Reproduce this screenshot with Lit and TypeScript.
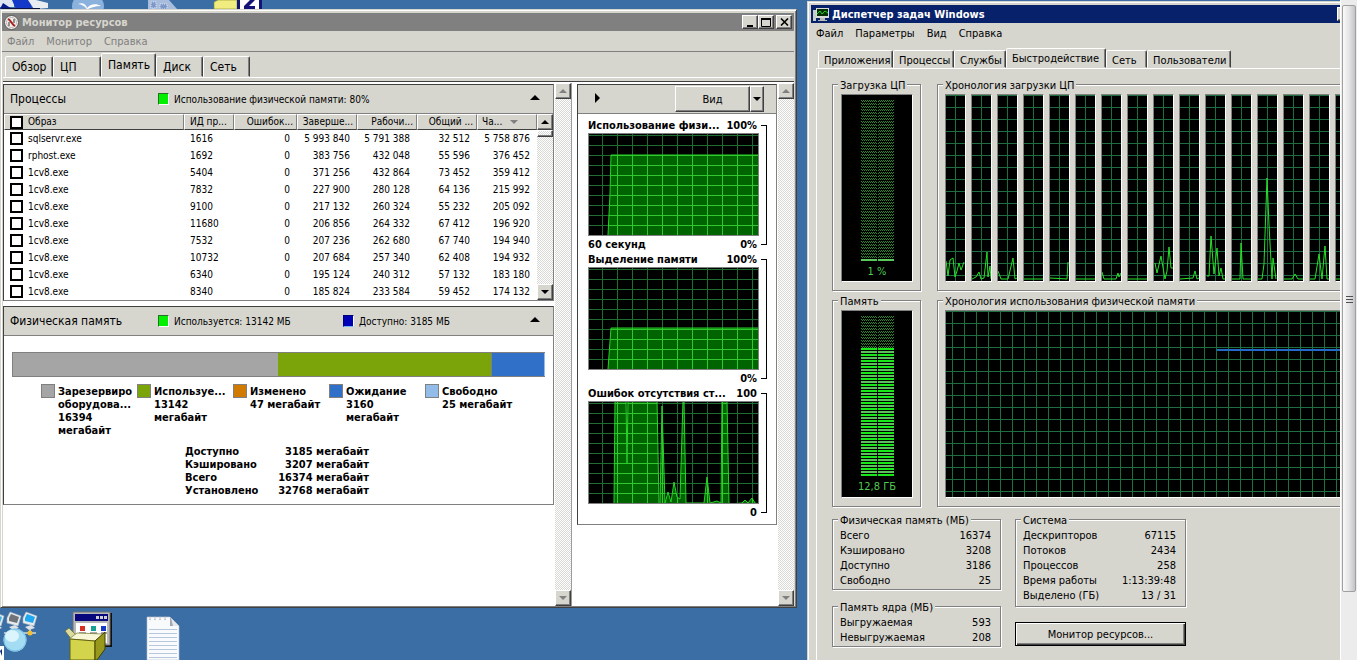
import { LitElement, html, svg, css } from "lit";
import { customElement } from "lit/decorators.js";
import { classMap } from "lit/directives/class-map.js";

type Row = [string, string, string, string, string, string, string];

const PROCESSES: Row[] = [
  ["sqlservr.exe", "1616", "0", "5 993 840", "5 791 388", "32 512", "5 758 876"],
  ["rphost.exe", "1692", "0", "383 756", "432 048", "55 596", "376 452"],
  ["1cv8.exe", "5404", "0", "371 256", "432 864", "73 452", "359 412"],
  ["1cv8.exe", "7832", "0", "227 900", "280 128", "64 136", "215 992"],
  ["1cv8.exe", "9100", "0", "217 132", "260 324", "55 232", "205 092"],
  ["1cv8.exe", "11680", "0", "206 856", "264 332", "67 412", "196 920"],
  ["1cv8.exe", "7532", "0", "207 236", "262 680", "67 740", "194 940"],
  ["1cv8.exe", "10732", "0", "207 684", "257 340", "62 408", "194 932"],
  ["1cv8.exe", "6340", "0", "195 124", "240 312", "57 132", "183 180"],
  ["1cv8.exe", "8340", "0", "185 824", "233 584", "59 452", "174 132"],
];

const SEGMENTS = [
  { kind: "reserved", mb: 16394, lines: ["Зарезервиро", "оборудова...", "16394", "мегабайт"] },
  { kind: "used", mb: 13142, lines: ["Используе...", "13142", "мегабайт"] },
  { kind: "modified", mb: 47, lines: ["Изменено", "47 мегабайт"] },
  { kind: "standby", mb: 3160, lines: ["Ожидание", "3160", "мегабайт"] },
  { kind: "free", mb: 25, lines: ["Свободно", "25 мегабайт"] },
];

const TOTALS = [
  ["Доступно", "3185 мегабайт"],
  ["Кэшировано", "3207 мегабайт"],
  ["Всего", "16374 мегабайт"],
  ["Установлено", "32768 мегабайт"],
];

const FLAT = "0,184 19,184";
const CPU_SERIES = [
  "0,166 2,181 4,165 7,163 9,182 11,176 13,168 15,175 18,167",
  "0,184 4,182 7,177 9,184 12,183 15,157 16,182 18,171 19,184",
  "0,176 3,184 10,184 15,163 17,184 19,183",
  FLAT,
  "0,183 17,184 18,167",
  FLAT,
  "0,177 2,184 14,184 16,178 17,182 19,178",
  FLAT,
  "1,168 3,178 7,161 11,184 13,176 15,152 17,173 19,173",
  "0,184 13,183 15,176 17,184 19,183",
  "1,181 3,181 5,141 8,179 11,153 13,181 15,173 17,184 19,184",
  "0,184 8,184 9,148 11,184 19,184",
  "0,184 4,184 6,169 9,83 11,130 14,184 15,163 18,184",
  "0,184 8,184 11,179 14,184 19,184",
  "0,184 5,184 9,159 12,184 15,151 17,184 19,184",
  FLAT,
];

const RAM_AREA = "19,101 21,60 22,21 170,21 170,102 19,102";
const COMMIT_AREA = "19,101 22,60 170,60 170,102 19,102";
const FAULTS_AREA =
  "25,102 26,-2 37,-2 38,62 39,-2 68,-2 70,102 71,101 73,4 76,101 79,90 82,100 85,80 88,95 91,97 94,-2 95,-2 97,101 110,101 115,101 118,75 121,101 128,99 132,101 132,102 133,-2 138,-2 140,102 153,101 156,98 159,101 163,96 166,101 169,102";

@customElement("app-root")
export class AppRoot extends LitElement {
  static styles = css`
    :host {
      --face: #d6d5ce;
      --shade: #808080;
      --dark: #404040;
      display: flex;
      height: 100vh;
      overflow: hidden;
      background: #fff;
      color: #000;
      font: 11px/13px "DejaVu Sans Condensed", "DejaVu Sans", "Noto Sans", sans-serif;
      cursor: default;
    }
    * { box-sizing: border-box; }
    button {
      font: inherit;
      color: inherit;
      margin: 0;
      padding: 0;
      border: 0;
      border-radius: 0;
      background: var(--face);
      white-space: nowrap;
    }
    svg { display: block; flex: none; }
    .desktop {
      position: relative;
      flex: 1;
      min-width: 0;
      overflow: hidden;
      background: #3a6ea5;
    }
    .shortcut { position: absolute; }
    .s-net { left: 0; top: 611px; }
    .s-box { left: 64px; top: 611px; }
    .s-note { left: 146px; top: 616px; }
    .s-pc { left: 0; top: 0; }
    .s-bird { left: 70px; top: 0; }
    .s-doc { left: 147px; top: 0; }
    .s-zip { left: 213px; top: 0; }

    .window {
      position: absolute;
      display: flex;
      flex-direction: column;
      background: var(--face);
      border: 1px solid;
      border-color: var(--face) var(--dark) var(--dark) var(--face);
      box-shadow: inset 1px 1px #fff, inset -1px -1px var(--shade);
    }
    .resmon { left: 0; top: 9px; width: 797px; height: 599px; padding: 3px 2px 1px 1px; }
    .taskman { left: 807px; top: 1px; right: -53px; height: 720px; padding: 3px; }
    .title {
      flex: none;
      display: flex;
      align-items: center;
      height: 18px;
      gap: 3px;
      padding: 0 2px;
      font-weight: bold;
      color: var(--face);
      background: var(--shade);
    }
    .taskman .title { color: #fff; background: #08216b; }
    .caption { flex: 1; margin: 0; font: inherit; font-weight: bold; }
    .controls { display: flex; color: #000; }
    .controls button { display: grid; place-items: center; width: 16px; height: 14px; }
    .controls button:last-child { margin-left: 2px; }
    .raised {
      border: 1px solid;
      border-color: #fff var(--dark) var(--dark) #fff;
      box-shadow: inset -1px -1px var(--shade);
    }
    .menu { flex: none; display: flex; height: 20px; gap: 12px; padding: 0 5px; align-items: center; }
    .menu button { background: none; }
    .resmon .menu { color: var(--shade); }

    .tabs { flex: none; display: grid; align-items: end; position: relative; }
    .tab {
      height: 21px;
      padding: 2px 0 0 6px;
      text-align: left;
      border: 1px solid;
      border-color: #fff var(--dark) transparent #fff;
      border-radius: 2px 2px 0 0;
      box-shadow: inset -1px 0 var(--shade);
    }
    .tab.on { height: 24px; padding-bottom: 2px; }
    .resmon .tabs {
      grid-template-columns: 48px 48px 55px 47px 47px;
      height: 26px;
      padding-left: 3px;
      font-size: 12px;
      border-top: 1px solid var(--shade);
    }
    .taskman .tabs {
      grid-template-columns: 75px 61px 52px 100px 41px 84px;
      height: 25px;
      padding-left: 7px;
    }
    .taskman .tab { height: 18px; padding-left: 5px; }
    .taskman .tab.on { height: 20px; }

    .body {
      flex: 1;
      min-height: 0;
      display: flex;
      margin-left: 1px;
      border-top: 1px solid #fff;
      padding-top: 3px;
    }
    .panes { flex: 1; display: flex; background: #fff; border-top: 1px solid var(--dark); padding-top: 1px; }
    .left { flex: 1; min-width: 0; display: flex; flex-direction: column; gap: 5px; padding-top: 1px; }
    .right { width: 200px; margin-left: 5px; padding-top: 1px; }
    .divider { width: 1px; background: #9c9c9c; }
    .bar {
      flex: none;
      display: flex;
      flex-direction: column;
      justify-content: space-between;
      width: 16px;
      background: repeating-conic-gradient(#d8d8d4 0 25%, #fff 0 50%) 0 0 / 2px 2px;
    }
    .bar button { display: grid; place-items: center; height: 16px; }
    .left + .bar { margin-left: 1px; }
    .right + .bar { margin-left: 1px; }

    .group { border: 1px solid var(--shade); border-top-color: var(--dark); border-left-color: var(--dark); background: #fff; }
    .group-head {
      display: grid;
      grid-template-columns: 148px 185px 1fr 36px;
      align-items: center;
      height: 29px;
      padding-left: 6px;
      background: var(--face);
      border-bottom: 1px solid var(--shade);
      font-size: 10px;
    }
    .group-head h2 { margin: 0; font-size: 12px; font-weight: normal; }
    .group-head button { display: grid; place-items: center; height: 20px; padding-bottom: 4px; }
    .metric { display: flex; align-items: center; gap: 5px; white-space: nowrap; }
    .chip { flex: none; width: 11px; height: 12px; border: 1px solid; border-color: #287028 #fff #fff #287028; background: #00f000; }
    .chip.blue { border-color: #00007a #fff #7ab4f8 #00007a; background: #0000b4; }

    .proc { display: flex; }
    .grid { flex: 1; table-layout: fixed; border-collapse: separate; border-spacing: 0; font-size: 10px; line-height: 12px; }
    .grid th, .grid td { padding: 0 7px 0 0; text-align: right; font-weight: normal; white-space: nowrap; overflow: hidden; }
    .grid th {
      height: 16px;
      background: var(--face);
      border: 1px solid;
      border-color: #fff var(--shade) var(--dark) #fff;
      padding-right: 3px;
    }
    .grid td { height: 17px; }
    .grid th:first-child, .grid td:first-child { text-align: left; padding-left: 6px; }
    .grid th:first-child { padding-left: 5px; }
    .grid .pid { text-align: left; padding-left: 6px; }
    .grid th.pid { padding-left: 5px; }
    .grid th:last-child { text-align: left; padding-left: 4px; }
    .c-pid { width: 50px; }
    .c-flt { width: 63px; }
    .c-num { width: 60px; }
    .name { display: flex; align-items: center; gap: 5px; }
    .check { appearance: none; flex: none; width: 13px; height: 13px; margin: 0; border: 2px solid #000; background: #fff; }
    .sort { display: inline-block; margin-left: 8px; border: 4px solid transparent; border-top-color: var(--shade); border-bottom: 0; vertical-align: middle; }
    .knob { height: 7px; }
    .proc .spacer { flex: 1; }

    .phys { padding: 16px 8px 7px; }
    .usage { display: flex; height: 25px; border: 1px solid var(--shade); }
    .seg { min-width: 0; }
    .seg.used { border-right: 1px solid var(--shade); }
    .reserved { background: #a5a5a5; }
    .used { background: #7ba30a; }
    .modified { background: #d07a00; }
    .standby { background: #3070c8; }
    .free { background: #94bce8; }
    .keys { display: grid; grid-template-columns: repeat(5, 96px); margin: 7px 0 7px 29px; font-weight: bold; }
    .key { display: flex; gap: 3px; white-space: nowrap; }
    .swatch { flex: none; width: 14px; height: 14px; border: 1px solid var(--shade); }
    .key p { margin: 1px 0 0; }
    .key span { display: block; }
    .totals { margin-left: 173px; border-spacing: 0; font-weight: bold; margin-top: 8px; }
    .totals th, .totals td { padding: 0; text-align: left; }
    .totals th { width: 83px; }
    .totals td { width: 101px; text-align: right; white-space: nowrap; }

    .view { display: flex; height: 29px; justify-content: space-between; padding: 1px 12px 0 17px; background: var(--face); border-bottom: 1px solid var(--shade); }
    .view > button { padding-bottom: 4px; }
    .split { display: flex; height: 26px; }
    .split button:first-child { width: 75px; }
    .split button:last-child { width: 14px; display: grid; place-items: center; }
    .charts { padding: 5px 9px 3px 10px; font-weight: bold; }
    .chart { display: grid; grid-template-columns: 171px 1fr; height: 134px; }
    .plot { display: grid; grid-template-rows: 14px 103px 17px; }
    .cap { display: flex; justify-content: space-between; padding-right: 2px; white-space: nowrap; }
    .foot { padding-top: 2px; }
    .screen { border: 1px solid var(--shade); background: #000; }
    .bracket { margin: 6px 0 8px 2px; border: 1px solid #000; border-left: 0; background: #fff; width: 6px; }

    .page {
      flex: 1;
      display: grid;
      grid-template-columns: 89px 1fr;
      align-content: start;
      gap: 3px 16px;
      margin-left: 5px;
      padding: 9px 0 0 15px;
      border-left: 1px solid #fff;
      border-top: 1px solid #fff;
    }
    fieldset {
      min-width: 0;
      margin: 0;
      padding: 3px 7px 8px;
      border: 1px solid var(--shade);
      box-shadow: 1px 1px #fff, inset 1px 1px #fff;
    }
    legend { padding: 0 2px; height: 13px; line-height: 16px; margin-left: -2px; background: var(--face); white-space: nowrap; }
    .sunken { border: 1px solid; border-color: var(--shade) #fff #fff var(--shade); background: #000; }
    .meter { display: flex; flex-direction: column; align-items: center; gap: 3px; width: 72px; height: 188px; padding-top: 5px; color: #52cc52; margin-left: 1px; }
    .cpus { display: flex; gap: 5px; overflow: hidden; height: 188px; }
    .cpus .sunken { flex: none; width: 21px; height: 188px; }
    .history { height: 188px; }
    .stats { grid-column: 1 / -1; display: grid; grid-template-columns: 169px 171px; column-gap: 14px; padding-top: 3px; }
    .col { display: flex; flex-direction: column; gap: 10px; }
    .col.sys { gap: 15px; }
    .facts { width: 100%; border-spacing: 0; }
    .facts th, .facts td { padding: 0; height: 15px; font-weight: normal; text-align: left; white-space: nowrap; }
    .facts td { text-align: right; }
    .stats fieldset { padding: 2px 9px 1px 7px; }
    .sys fieldset { padding-bottom: 3px; }
    .push { height: 24px; border: 1px solid #000; box-shadow: inset 1px 1px #fff, inset -1px -1px var(--dark), inset -2px -2px var(--shade); }

    .viewer { flex: none; width: 17px; padding: 5px 1px 0; background: #ececec; border-left: 1px solid #fff; }
    .handle {
      display: grid;
      place-items: center;
      height: calc(100% - 68px);
      border: 1px solid #a0a0a0;
      border-radius: 2px;
      background: linear-gradient(90deg, #fafafa, #e4e4e6 50%, #c4c4c8);
    }
    .margin { flex: none; width: 9px; }
  `;

  private arrow(dir: "up" | "down" | "right", color = "#000", s = 5) {
    const d =
      dir === "up" ? `M0 ${s}L${s} 0L${2 * s} ${s}Z` : dir === "down" ? `M0 0L${s} ${s}L${2 * s} 0Z` : `M0 0L${s} ${s}L0 ${2 * s}Z`;
    const w = dir === "right" ? s : 2 * s;
    const h = dir === "right" ? 2 * s : s;
    return html`<svg width=${w} height=${h} aria-hidden="true"><path d=${d} fill=${color} /></svg>`;
  }

  private scrollbar(label: string) {
    return html`<div class="bar">
      <button class="raised" aria-label="${label}: вверх">${this.arrow("up", "#808080", 4)}</button>
      <button class="raised" aria-label="${label}: вниз">${this.arrow("down", "#808080", 4)}</button>
    </div>`;
  }

  private tabs(names: string[], active: string) {
    return html`<div class="tabs" role="tablist">
      ${names.map((n) => html`<button role="tab" aria-selected=${n === active} class=${classMap({ tab: true, on: n === active })}>${n}</button>`)}
    </div>`;
  }

  private menu(items: string[]) {
    return html`<nav class="menu">${items.map((i) => html`<button>${i}</button>`)}</nav>`;
  }

  private controls() {
    return html`<div class="controls">
      <button class="raised" aria-label="Свернуть"><svg width="10" height="9"><path d="M2 7H8V9H2Z" /></svg></button>
      <button class="raised" aria-label="Развернуть"><svg width="10" height="9"><path d="M.5 0V8.500H9.500V0M0 1H10" fill="none" stroke="#000" /><path d="M0 0H10V2H0Z" /></svg></button>
      <button class="raised" aria-label="Закрыть"><svg width="9" height="8"><path d="M1 .5L8 7.500M8 .5L1 7.500" stroke="#000" stroke-width="1.600" /></svg></button>
    </div>`;
  }

  private chart(id: string, title: string, max: string, left: string, min: string, area: string) {
    return html`<section class="chart">
      <div class="plot">
        <div class="cap"><span>${title}</span><span>${max}</span></div>
        <div class="screen">
          <svg width="169" height="101" aria-hidden="true">
            <defs>
              <pattern id="g-${id}" x="13" y="11" width="15" height="10" patternUnits="userSpaceOnUse"><path d="M0 0H15V1H0ZM0 0H1V10H0Z" fill="#1e6e34" /></pattern>
              <pattern id="b-${id}" x="13" y="11" width="15" height="10" patternUnits="userSpaceOnUse"><path fill="#006400" d="M0 0H15V10H0Z" /><path d="M0 0H15V1H0ZM0 0H1V10H0Z" fill="#32c832" /></pattern>
            </defs>
            <rect width="169" height="101" fill="url(#g-${id})" />
            <polygon points=${area} fill="url(#b-${id})" stroke="#28d228" />
          </svg>
        </div>
        <div class="cap foot"><span>${left}</span><span>${min}</span></div>
      </div>
      <div class="bracket"></div>
    </section>`;
  }

  private gauge(id: string, fill: number, height: number, text: string) {
    const top = height - fill;
    return html`<div class="sunken meter">
      <svg width="33" height=${height} aria-hidden="true">
        <defs>
          <pattern id="d-${id}" width="2" height="3" patternUnits="userSpaceOnUse"><path d="M0 0H1V1H0ZM1 1H2V2H1Z" fill="#2a8a2a" /></pattern>
          <pattern id="l-${id}" y=${top} width="33" height="6" patternUnits="userSpaceOnUse"><path d="M0 0H33V2H0Z" fill=${fill > 5 ? "#18e818" : "#5cc85c"} /><path d="M0 3H33V5H0Z" fill="#5cc05c" /></pattern>
        </defs>
        <rect width="33" height=${top} fill="url(#d-${id})" />
        <rect y=${top} width="33" height=${fill} fill="url(#l-${id})" />
        <path d="M16.5 0V${height}" stroke="#000" />
      </svg>
      <span>${text}</span>
    </div>`;
  }

  private facts(title: string, rows: string[][]) {
    return html`<fieldset>
      <legend>${title}</legend>
      <table class="facts">
        ${rows.map((r) => html`<tr><th scope="row">${r[0]}</th><td>${r[1]}</td></tr>`)}
      </table>
    </fieldset>`;
  }

  private desktopIcons() {
    const screen = (x: number, c: string) => svg`<path d="M${x} 7L${x + 3} 1L${x + 14} 5L${x + 11} 15L${x} 12Z" fill="#e8ecf0" stroke="#b0b8c0" stroke-width=".6"/><path d="M${x + 2} 7L${x + 4} 3L${x + 12} 6L${x + 10} 12L${x + 2} 10Z" fill=${c}/><path d="M${x + 2} 16L${x + 8} 14L${x + 12} 17L${x + 6} 19Z" fill="#dde2e6"/>`;
    return html`
      <svg class="shortcut s-pc" width="50" height="10"><path d="M0 0H14V7H0Z" fill="#dfe6f0" /><path d="M12 0H30L32 9H16Z" fill="#1438c8" /><path d="M3 3L12 9H0Z" fill="#0a1a8c" /><path d="M28 0H36L48 3V8L34 9Z" fill="#e9edf2" /><path d="M2 8H40V9H2Z" fill="#0a1240" /></svg>
      <svg class="shortcut s-bird" width="36" height="10"><ellipse cx="18" cy="6" rx="16" ry="13" fill="#8ab2dc" /><path d="M8 4C12 2 16 4 17 8C20 4 26 3 31 6C25 6 20 8 17 9.500C15 6 12 4.500 8 4Z" fill="#fff" /></svg>
      <svg class="shortcut s-doc" width="32" height="10"><path d="M1 0H22L30 9H1Z" fill="#a8bcdc" /><path d="M4 2H9V8H4ZM13 4H20V9H13Z" fill="#8098c8" stroke="#d8e4f4" stroke-dasharray="1 1" /></svg>
      <svg class="shortcut s-zip" width="50" height="10"><path d="M1 2L5 0H24V9H1Z" fill="#f0ec80" stroke="#8c8a20" stroke-width=".6" /><path d="M24 0H49V9H24Z" fill="#141478" /><path d="M27 0H46V9H27Z" fill="#fff" /><path d="M32 0H42L36 6H42V9H31V6L37 0Z" fill="#141478" /></svg>
      <svg class="shortcut s-net" width="40" height="49">
        ${screen(-10, "#35b4e8")}${screen(7, "#707478")}${screen(23, "#20a8f0")}
        <path d="M4 22H36M14 20V28M30 18V22" stroke="#d8dcd8" stroke-width="1.500" />
        <circle cx="30" cy="22" r="2.500" fill="#f0c030" />
        <circle cx="15" cy="29" r="11.500" fill="#a4dcf4" /><circle cx="15" cy="29" r="11" fill="none" stroke="#78c0e4" /><ellipse cx="12" cy="25" rx="7" ry="6" fill="#dcf4fc" />
        <path d="M0 35H4V49H0Z" fill="#fff" /><path d="M0 40L2 38V45" fill="#082878" />
      </svg>
      <svg class="shortcut s-box" width="50" height="49">
        <path d="M11 2H48V36H11Z" fill="#101010" /><path d="M9 1H46V34H9Z" fill="#b8b8b8" stroke="#707070" /><path d="M11 3H44V10H11Z" fill="#08087c" />
        <path d="M32 5H35V8H32ZM36 5H39V8H36ZM40 5H43V8H40Z" fill="#d0d0d0" /><path d="M12 12H43V32H12Z" fill="#fff" />
        <path d="M16 15H21V20H16Z" fill="#d83020" /><path d="M27 15H32V20H27Z" fill="#18a090" /><path d="M37 15H42V20H37Z" fill="#1838c8" /><path d="M15 22H22M26 22H33M37 22H43" stroke="#505050" />
        <path d="M1 20L5 17L12 24L8 29Z" fill="#dcdca0" stroke="#606010" stroke-width=".6" /><path d="M5 28L13 22L40 23L31 30Z" fill="#f8f8d8" stroke="#606010" stroke-width=".6" />
        <path d="M6 28L31 30V49H6Z" fill="#d4d44c" stroke="#606010" /><path d="M31 30L41 21V38L33 49H31Z" fill="#98981c" stroke="#404000" />
      </svg>
      <svg class="shortcut s-note" width="34" height="44">
        <path d="M1 1H24L33 10V44H1Z" fill="#f8fafc" stroke="#b8c4d0" stroke-width=".6" /><path d="M24 1V10H33Z" fill="#a0a8b4" /><path d="M25 2L33 10H27Z" fill="#e4e8ec" />
        <path d="M3 13.500H31M3 17.500H31M3 21.500H31M3 25.500H31M3 29.500H31M3 33.500H31M3 37.500H31M3 41.500H31" stroke="#b8c8dc" />
        <path d="M4 0V4M9 0V4M14 0V4M19 0V4" stroke="#8898a8" stroke-dasharray="1.500 1" />
      </svg>`;
  }

  private resourceMonitor() {
    return html`<section class="window resmon">
      <header class="title">
        <svg width="15" height="15" viewBox="0 0 15 15" aria-hidden="true"><circle cx="7.500" cy="7.500" r="7" fill="#f4f0ec" stroke="#585858" /><circle cx="7.500" cy="7.500" r="5" fill="none" stroke="#b8b0b0" /><path d="M4 4.500C6 4 6 6 7.500 7.500S9 11 11 10.500" fill="none" stroke="#a82020" stroke-width="2" /><path d="M5 7V11M10 4V8" stroke="#303030" /></svg>
        <h1 class="caption">Монитор ресурсов</h1>
        ${this.controls()}
      </header>
      ${this.menu(["Файл", "Монитор", "Справка"])}
      ${this.tabs(["Обзор", "ЦП", "Память", "Диск", "Сеть"], "Память")}
      <div class="body">
        <div class="panes">
          <div class="left">
            <section class="group">
              <div class="group-head">
                <h2>Процессы</h2>
                <div class="metric"><i class="chip"></i>Использование физической памяти: 80%</div>
                <span></span>
                <button aria-label="Свернуть процессы">${this.arrow("up")}</button>
              </div>
              <div class="proc">
                <table class="grid">
                  <colgroup><col /><col class="c-pid" /><col class="c-flt" /><col class="c-num" /><col class="c-num" /><col class="c-num" /><col class="c-num" /></colgroup>
                  <thead><tr>
                    <th><label class="name"><input class="check" type="checkbox" />Образ</label></th>
                    <th class="pid">ИД пр...</th><th>Ошибок...</th><th>Заверше...</th><th>Рабочи...</th><th>Общий ...</th><th>Ча...<i class="sort"></i></th>
                  </tr></thead>
                  <tbody>
                    ${PROCESSES.map((p) => html`<tr>
                      <td><label class="name"><input class="check" type="checkbox" />${p[0]}</label></td>
                      <td class="pid">${p[1]}</td>
                      ${p.slice(2).map((v) => html`<td>${v}</td>`)}
                    </tr>`)}
                  </tbody>
                </table>
                <div class="bar">
                  <button class="raised" aria-label="Вверх">${this.arrow("up", "#000", 4)}</button>
                  <div class="raised knob"></div>
                  <div class="spacer"></div>
                  <button class="raised" aria-label="Вниз">${this.arrow("down", "#000", 4)}</button>
                </div>
              </div>
            </section>
            <section class="group">
              <div class="group-head">
                <h2>Физическая память</h2>
                <div class="metric"><i class="chip"></i>Используется: 13142 МБ</div>
                <div class="metric"><i class="chip blue"></i>Доступно: 3185 МБ</div>
                <button aria-label="Свернуть память">${this.arrow("up")}</button>
              </div>
              <div class="phys">
                <div class="usage">${SEGMENTS.map((s) => html`<div class="seg ${s.kind}" style="flex-grow:${s.mb}"></div>`)}</div>
                <div class="keys">
                  ${SEGMENTS.map((s) => html`<div class="key"><i class="swatch ${s.kind}"></i><p>${s.lines.map((l) => html`<span>${l}</span>`)}</p></div>`)}
                </div>
                <table class="totals">
                  ${TOTALS.map((t) => html`<tr><th scope="row">${t[0]}</th><td>${t[1]}</td></tr>`)}
                </table>
              </div>
            </section>
          </div>
          ${this.scrollbar("Таблицы")}
          <div class="divider"></div>
          <div class="right">
            <section class="group">
              <div class="view">
                <button aria-label="Скрыть графики">${this.arrow("right")}</button>
                <div class="split"><button class="raised">Вид</button><button class="raised" aria-label="Выбрать вид">${this.arrow("down", "#000", 4)}</button></div>
              </div>
              <div class="charts">
                ${this.chart("ram", "Использование физи...", "100%", "60 секунд", "0%", RAM_AREA)}
                ${this.chart("commit", "Выделение памяти", "100%", "", "0%", COMMIT_AREA)}
                ${this.chart("faults", "Ошибок отсутствия ст...", "100", "", "0", FAULTS_AREA)}
              </div>
            </section>
          </div>
          ${this.scrollbar("Графики")}
        </div>
      </div>
    </section>`;
  }

  private taskManager() {
    return html`<section class="window taskman">
      <header class="title">
        <svg width="16" height="15" viewBox="0 0 16 15" aria-hidden="true"><path d="M0 3H3V14H0Z" fill="#c8ccc8" /><path d="M3 1H16V11H3Z" fill="#d8dcd8" /><path d="M4 2H15V9H4Z" fill="#083008" /><path d="M4 7L7 4L9 7L12 4L15 6" fill="none" stroke="#20d020" /><path d="M7 11H12V13H14V14H5V13H7Z" fill="#b8bcb8" /></svg>
        <h1 class="caption">Диспетчер задач Windows</h1>
        ${this.controls()}
      </header>
      ${this.menu(["Файл", "Параметры", "Вид", "Справка"])}
      ${this.tabs(["Приложения", "Процессы", "Службы", "Быстродействие", "Сеть", "Пользователи"], "Быстродействие")}
      <div class="page">
        <fieldset><legend>Загрузка ЦП</legend>${this.gauge("cpu", 3, 162, "1 %")}</fieldset>
        <fieldset>
          <legend>Хронология загрузки ЦП</legend>
          <div class="cpus">
            ${CPU_SERIES.map((pts, i) => html`<div class="sunken"><svg width="19" height="186" aria-hidden="true">
              <defs><pattern id="c${i}" width="19" height="12" patternUnits="userSpaceOnUse"><path d="M0 0H19V1H0ZM9 0H10V12H9Z" fill="#1f6e40" /></pattern></defs>
              <rect width="19" height="186" fill="url(#c${i})" />
              <polyline points=${pts} fill="none" stroke="#28e028" />
            </svg></div>`)}
          </div>
        </fieldset>
        <fieldset><legend>Память</legend>${this.gauge("mem", 129, 161, "12,8 ГБ")}</fieldset>
        <fieldset>
          <legend>Хронология использования физической памяти</legend>
          <div class="sunken history"><svg width="100%" height="186" aria-hidden="true">
            <defs><pattern id="hist" x="6" width="12" height="12" patternUnits="userSpaceOnUse"><path d="M0 0H12V1H0ZM0 0H1V12H0Z" fill="#1f6e40" /></pattern></defs>
            <rect width="100%" height="186" fill="url(#hist)" />
            <path d="M271 39H600" fill="none" stroke="#2468c8" stroke-width="2" />
          </svg></div>
        </fieldset>
        <div class="stats">
          <div class="col">
            ${this.facts("Физическая память (МБ)", [["Всего", "16374"], ["Кэшировано", "3208"], ["Доступно", "3186"], ["Свободно", "25"]])}
            ${this.facts("Память ядра (МБ)", [["Выгружаемая", "593"], ["Невыгружаемая", "208"]])}
          </div>
          <div class="col sys">
            ${this.facts("Система", [["Дескрипторов", "67115"], ["Потоков", "2434"], ["Процессов", "258"], ["Время работы", "1:13:39:48"], ["Выделено (ГБ)", "13 / 31"]])}
            <button class="push">Монитор ресурсов...</button>
          </div>
        </div>
      </div>
    </section>`;
  }

  render() {
    return html`
      <main class="desktop">${this.desktopIcons()}${this.resourceMonitor()}${this.taskManager()}</main>
      <div class="viewer"><div class="handle"><svg width="7" height="8"><path d="M0 1.500H7M0 4.500H7M0 7.500H7" stroke="#505050" /></svg></div></div>
      <div class="margin"></div>`;
  }
}
